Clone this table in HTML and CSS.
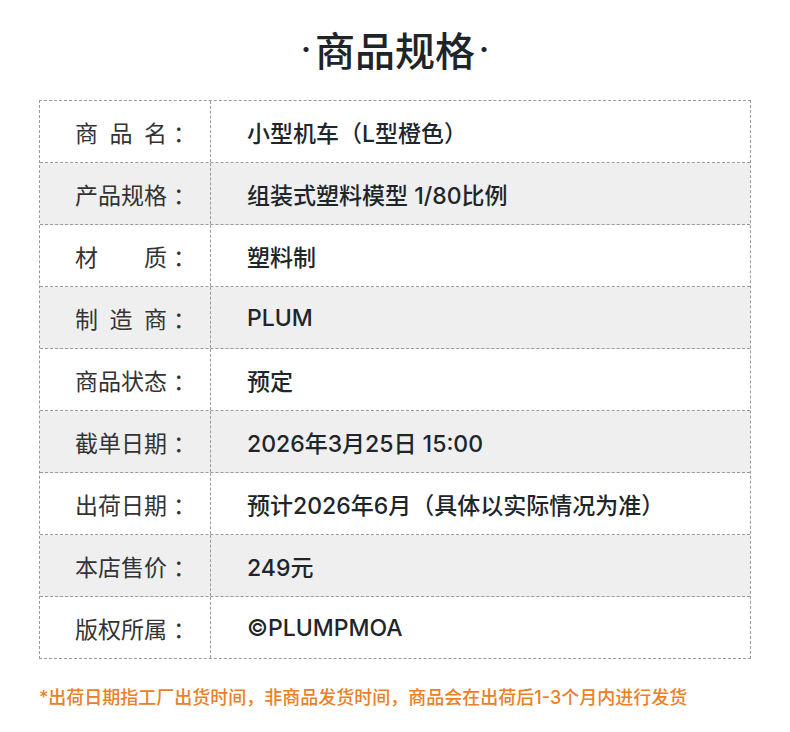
FILE: index.html
```html
<!DOCTYPE html>
<html lang="zh-CN">
<head>
<meta charset="utf-8">
<title>商品规格</title>
<link rel="stylesheet" href="styles.css">
</head>
<body>
<div class="page">
  <h1 class="title"><span class="dot">·</span>商品规格<span class="dot">·</span></h1>
  <div class="spec">
    <div class="row"><div class="label"><span class="lt">商品名</span><span class="colon">：</span></div><div class="value">小型机车（L型橙色）</div></div>
    <div class="row alt"><div class="label"><span class="lt">产品规格</span><span class="colon">：</span></div><div class="value">组装式塑料模型 1/80比例</div></div>
    <div class="row"><div class="label"><span class="lt">材质</span><span class="colon">：</span></div><div class="value">塑料制</div></div>
    <div class="row alt"><div class="label"><span class="lt">制造商</span><span class="colon">：</span></div><div class="value">PLUM</div></div>
    <div class="row"><div class="label"><span class="lt">商品状态</span><span class="colon">：</span></div><div class="value">预定</div></div>
    <div class="row alt"><div class="label"><span class="lt">截单日期</span><span class="colon">：</span></div><div class="value">2026年3月25日 15:00</div></div>
    <div class="row"><div class="label"><span class="lt">出荷日期</span><span class="colon">：</span></div><div class="value">预计2026年6月（具体以实际情况为准）</div></div>
    <div class="row alt"><div class="label"><span class="lt">本店售价</span><span class="colon">：</span></div><div class="value">249元</div></div>
    <div class="row"><div class="label"><span class="lt">版权所属</span><span class="colon">：</span></div><div class="value">©PLUMPMOA</div></div>
  </div>
  <p class="note">*出荷日期指工厂出货时间，非商品发货时间，商品会在出荷后1-3个月内进行发货</p>
</div>
</body>
</html>
```

FILE: styles.css
```css
html, body {
  margin: 0;
  padding: 0;
  background: #ffffff;
}

body {
  font-family: "Noto Sans CJK SC", "Noto Sans", sans-serif;
  color: #222;
}

.page {
  width: 712px;
  margin: 0 auto;
}

.title {
  height: 100px;
  margin: 0;
  display: flex;
  align-items: center;
  justify-content: center;
  font-size: 40px;
  font-weight: 500;
  color: #1f2428;
  padding-bottom: 2px;
  box-sizing: border-box;
}

.dot {
  font-family: Inter, "Noto Sans CJK SC", sans-serif;
  font-weight: 700;
  font-size: 30px;
  margin: 0 4px;
}

.spec {
  border: 1px dashed #9a9a9a;
}

.row {
  display: grid;
  grid-template-columns: 171px 1fr;
  height: 62px;
  border-bottom: 1px dashed #9a9a9a;
  box-sizing: border-box;
}

.row:last-child {
  height: 61px;
  border-bottom: none;
}

.row.alt {
  background: #efefef;
}

.label {
  border-right: 1px dashed #9a9a9a;
  display: flex;
  align-items: center;
  padding-left: 35px;
  font-size: 23px;
  color: #333;
  font-weight: 400;
}

.lt {
  display: inline-block;
  width: 4em;
  text-align: justify;
  text-align-last: justify;
  white-space: nowrap;
}

.colon {
  display: inline-block;
  margin-left: 6px;
}

.value {
  display: flex;
  align-items: center;
  padding-left: 36px;
  font-family: Inter, "Noto Sans CJK SC", sans-serif;
  font-size: 23px;
  font-weight: 500;
  color: #1e252b;
  white-space: nowrap;
}

.note {
  margin: 24px 0 0 0;
  font-family: Inter, "Noto Sans CJK SC", sans-serif;
  font-size: 18px;
  font-weight: 500;
  color: #ec8026;
  white-space: nowrap;
}
```
